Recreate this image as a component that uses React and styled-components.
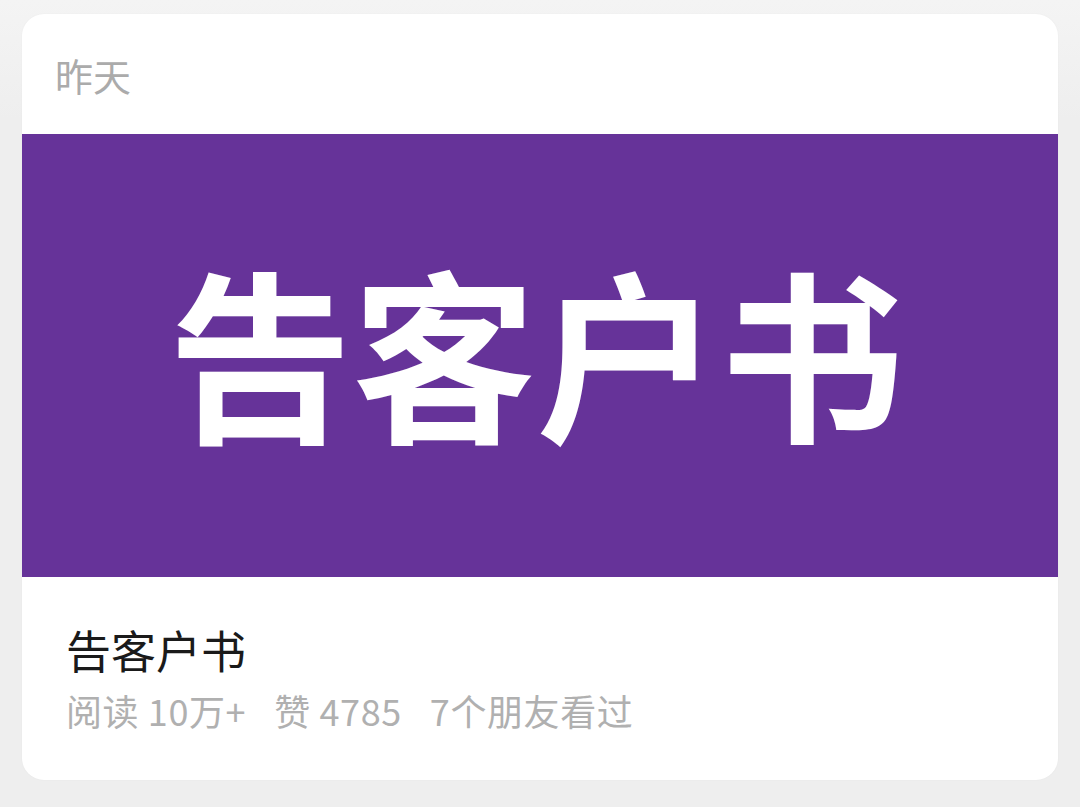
import styled, { createGlobalStyle } from "styled-components";

const GlobalStyle = createGlobalStyle`
  html, body {
    margin: 0;
    padding: 0;
    background: #eeeeee;
    font-family: "Noto Sans CJK SC", "Noto Sans", sans-serif;
  }
`;

const Page = styled.div`
  width: 1080px;
  height: 807px;
  box-sizing: border-box;
  padding: 14px 22px 0 22px;
  background: linear-gradient(#f4f4f4, #eeeeee 120px);
`;

const Card = styled.div`
  background: #ffffff;
  border-radius: 22px;
  overflow: hidden;
  height: 766px;
  display: flex;
  flex-direction: column;
  box-shadow: 0 0 2px rgba(0, 0, 0, 0.04);
`;

const CardHeader = styled.div`
  height: 120px;
  box-sizing: border-box;
  padding: 36px 0 0 33px;
  color: #ababab;
  font-size: 38px;
  line-height: 50px;
`;

const Banner = styled.div`
  height: 443px;
  background: #663399;
  display: flex;
  align-items: center;
  justify-content: center;
`;

const BannerText = styled.div`
  color: #ffffff;
  font-size: 184px;
  font-weight: 700;
  line-height: 1;
  margin-left: -8px;
  margin-top: -14px;
`;

const CardBody = styled.div`
  padding: 44px 0 0 44px;
  display: flex;
  flex-direction: column;
`;

const Title = styled.div`
  color: #1a1a1a;
  font-size: 45px;
  line-height: 58px;
`;

const Meta = styled.div`
  color: #b0b0b0;
  font-size: 36px;
  line-height: 50px;
  margin-top: 6px;
  display: flex;
  gap: 28px;
  letter-spacing: 0.6px;
`;

export default function App() {
  return (
    <>
      <GlobalStyle />
      <Page>
        <Card>
          <CardHeader>昨天</CardHeader>
          <Banner>
            <BannerText>告客户书</BannerText>
          </Banner>
          <CardBody>
            <Title>告客户书</Title>
            <Meta>
              <span>阅读 10万+</span>
              <span>赞 4785</span>
              <span>7个朋友看过</span>
            </Meta>
          </CardBody>
        </Card>
      </Page>
    </>
  );
}
